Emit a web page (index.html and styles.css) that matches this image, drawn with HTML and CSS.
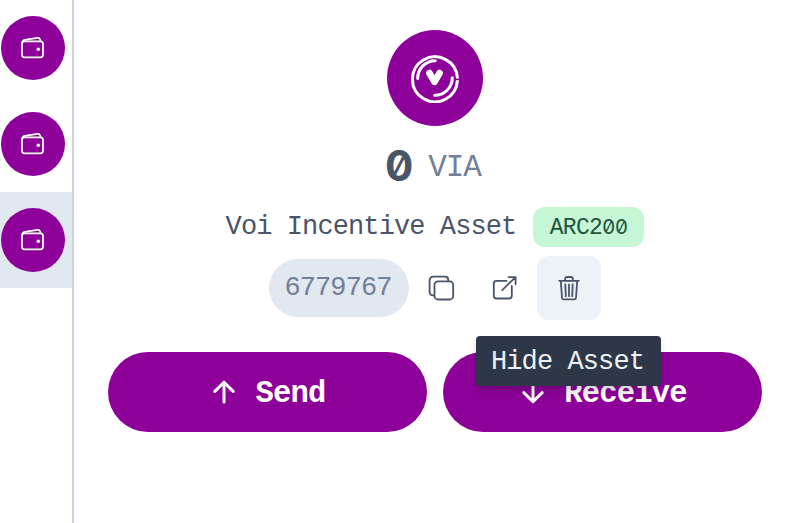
FILE: index.html
```
<!DOCTYPE html>
<html lang="en">
<head>
<meta charset="utf-8">
<title>Asset</title>
<link rel="stylesheet" href="styles.css">
</head>
<body>
<svg class="defs" width="0" height="0"><symbol id="wallet" viewBox="0 0 24 24"><g fill="none" stroke="#fff" stroke-width="1.6" stroke-linecap="round" stroke-linejoin="round"><rect x="1.8" y="5.8" width="19.4" height="14.8" rx="2.3"/><path d="M1.8 8.5C1.8 6 2.5 4.9 4.5 4.5L16 2.7Q18.6 2.3 18.9 5.6"/></g><circle cx="16.9" cy="13.2" r="1.6" fill="#fff"/></symbol></svg>
<div class="app">
  <nav class="sidebar">
    <a class="account"><span class="avatar"><svg><use href="#wallet"/></svg></span></a>
    <a class="account"><span class="avatar"><svg><use href="#wallet"/></svg></span></a>
    <a class="account active"><span class="avatar"><svg><use href="#wallet"/></svg></span></a>
  </nav>
  <main>
    <div class="logo">
      <svg width="50" height="50" viewBox="0 0 50 50" fill="none" stroke="#fff" stroke-width="3" stroke-linecap="round">
        <path d="M47.4 27.6A22.5 22.5 0 1 1 47.4 25"/>
        <path d="M7.7 25.4A17.5 17.5 0 0 1 25.3 7.7M42.3 24.8A17.5 17.5 0 0 1 24.7 42.3"/>
        <path class="gap" d="M45 26.4H50"/>
        <path d="M19.4 20L24.5 28.8L29.6 20" stroke-width="6.6" stroke-linejoin="round"/>
      </svg>
    </div>
    <div class="balance"><span class="amount">0</span><span class="unit">VIA</span></div>
    <div class="name"><span>Voi Incentive Asset</span><span class="tag">ARC2<span class="zeros">00</span></span></div>
    <div class="details">
      <span class="id">6779767</span>
      <button class="icon"><svg width="28" height="28" viewBox="0 0 28 28"><rect x="7.5" y="7.3" width="18.7" height="18.2" rx="3.5"/><path d="M7.2 21.3H6Q2.6 21.3 2.6 17.5V6.5Q2.6 2.6 6.5 2.6H18Q21.3 2.6 21.3 6V7"/></svg></button>
      <button class="icon"><svg width="28" height="28" viewBox="0 0 28 28"><path d="M15.5 6.8H5.6Q2.8 6.8 2.8 9.6V21.8Q2.8 24.5 5.6 24.5H18Q20.8 24.5 20.8 21.8V12M11.2 16.2L24.5 3.2M17.6 3.2H24.6V10.2"/></svg></button>
      <button class="icon hover"><svg width="28" height="28" viewBox="0 0 28 28"><path d="M4.2 6.8H23.8M10.2 6.5V4.7Q10.2 3 12 3H16Q17.8 3 17.8 4.7V6.5M5.8 7L7 23.7Q7.1 25.4 8.8 25.4H19.2Q20.9 25.4 21 23.7L22.2 7M10.3 10.3L10.8 22.2M14 10.3V22.2M17.7 10.3L17.2 22.2"/></svg><span class="tooltip">Hide Asset</span></button>
    </div>
    <div class="actions">
      <button class="action"><svg width="32" height="32" viewBox="0 0 32 32"><path d="M16 26V6.5M6.8 15.4L16 6.2L25.2 15.4"/></svg><span>Send</span></button>
      <button class="action"><svg width="32" height="32" viewBox="0 0 32 32"><path d="M16 6V25.5M6.8 16.6L16 25.8L25.2 16.6"/></svg><span>Receive</span></button>
    </div>
  </main>
</div>
</body>
</html>
```
FILE: styles.css
```
* { box-sizing: border-box; }
body { margin: 0; background: #fff; color: #4a5568; font-family: "Liberation Mono", monospace; overflow: hidden; }
button { border: 0; padding: 0; background: none; color: inherit; font-family: inherit; }
.defs { position: absolute; }
.app { display: flex; height: 523px; }
.sidebar { width: 74px; border-right: 2px solid #cbd5e0; flex: none; }
.account { display: flex; align-items: center; height: 96px; padding-left: 1px; }
.account.active { background: #e2e8f0; }
.avatar { display: flex; align-items: center; justify-content: center; width: 64px; height: 64px; border-radius: 50%; background: #8d0099; }
.avatar svg { width: 26px; height: 26px; }
main { flex: 1; display: flex; flex-direction: column; align-items: center; padding: 30px 32px 0 34px; }
.logo { display: flex; align-items: center; justify-content: center; width: 96px; height: 96px; border-radius: 50%; background: #8d0099; }
.gap { stroke: #8d0099; stroke-width: 1.6; stroke-linecap: butt; }
.balance { display: flex; align-items: center; height: 81px; gap: 16px; margin-left: -3px; }
.amount { width: 26px; display: flex; justify-content: center; padding-bottom: 2px; font: 700 42px/50px Inter, sans-serif; font-feature-settings: "zero" 1; }
.unit { padding-top: 1px; font-size: 31px; letter-spacing: -1.1px; color: #718096; }
.name { display: flex; align-items: center; height: 40px; gap: 17px; margin-left: -1px; font-size: 27px; letter-spacing: -.9px; white-space: pre; }
.name > .tag { margin-right: -1px; }
.tag { display: flex; align-items: baseline; justify-content: center; width: 111px; height: 40px; line-height: 40px; border-radius: 12px; background: #c6f6d5; color: #22543d; font-size: 23px; letter-spacing: -.7px; }
.zeros { font-family: Inter, sans-serif; font-size: 20.5px; font-feature-settings: "zero" 1; letter-spacing: 0; }
.details { display: flex; align-items: center; height: 64px; margin-top: 9px; }
.id { display: flex; align-items: center; justify-content: center; width: 140px; height: 58px; padding-right: 2px; border-radius: 29px; background: #e2e8f0; color: #718096; font-size: 27px; letter-spacing: -.9px; }
.icon { position: relative; display: flex; align-items: center; justify-content: center; width: 64px; height: 64px; border-radius: 12px; }
.icon svg { fill: none; stroke: #4a5568; stroke-width: 1.8; stroke-linecap: round; stroke-linejoin: round; }
.icon.hover { background: #edf2f7; }
.tooltip { position: absolute; top: 80px; left: -61px; z-index: 2; width: 185px; height: 50px; padding-right: 2px; border-radius: 4px; background: #2d3748; color: #edf2f7; font-size: 27px; line-height: 52px; letter-spacing: -.9px; text-align: center; white-space: nowrap; box-shadow: 0 8px 12px -2px rgba(0,0,0,.12), 0 3px 6px rgba(0,0,0,.08); }
.actions { display: flex; gap: 16px; width: 654px; margin-top: 32px; }
.action { flex: 1; display: flex; align-items: center; justify-content: center; gap: 15px; height: 80px; padding-right: 1px; border-radius: 40px; background: #8d0099; color: #fff; font-size: 30.5px; font-weight: 700; letter-spacing: -.8px; }
.action span { padding-top: 3px; }
.action svg { fill: none; stroke: #fff; stroke-width: 3; stroke-linecap: round; stroke-linejoin: round; }
```
